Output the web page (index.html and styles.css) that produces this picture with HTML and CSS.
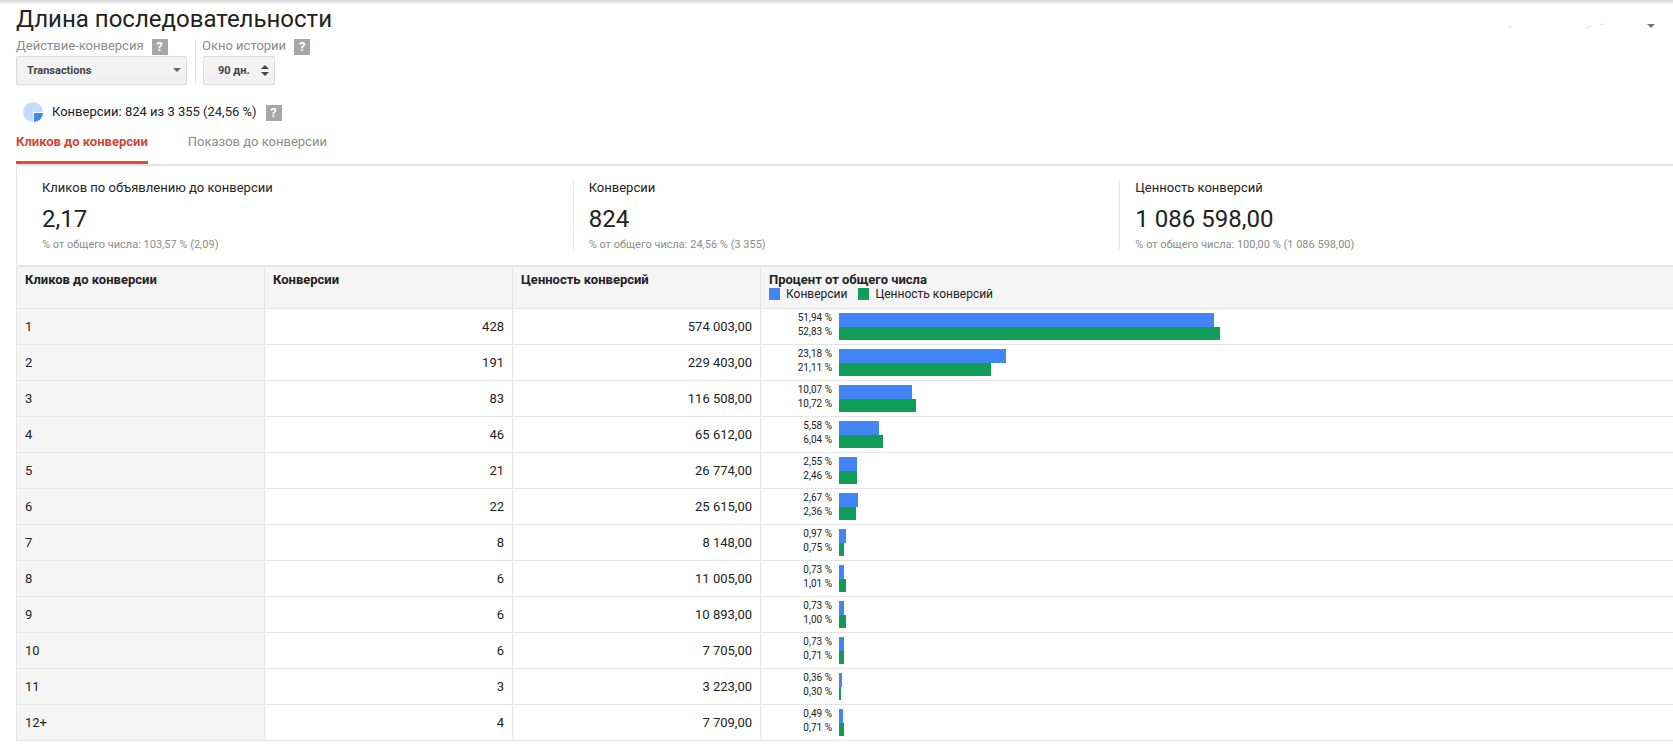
FILE: index.html
```html
<!DOCTYPE html>
<html lang="ru">
<head>
<meta charset="utf-8">
<title>Длина последовательности</title>
<link rel="stylesheet" href="styles.css">
</head>
<body>
<header class="head">
  <h1 class="title">Длина последовательности</h1>
  <div class="account">
    <svg class="marks" width="110" height="8" viewBox="0 0 110 8" aria-hidden="true"><path d="M2 6l3-2M80 6l5-2M94 3l4-1" stroke="#ddd" fill="none"/></svg>
    <button class="account-menu" type="button" aria-label="Меню"><svg width="8" height="4" viewBox="0 0 8 4"><path d="M0 0h8L4 4z" fill="#777"/></svg></button>
  </div>
</header>
<main>
  <form class="filters">
    <div class="filter">
      <div class="filter-label"><label for="action">Действие-конверсия</label><button class="help" type="button">?</button></div>
      <div class="picker picker-wide">
        <select id="action"><option>Transactions</option></select>
        <svg class="picker-icon" width="8" height="4" viewBox="0 0 8 4"><path d="M0 0h8L4 4z" fill="#666"/></svg>
      </div>
    </div>
    <div class="filter filter-second">
      <div class="filter-label"><label for="window">Окно истории</label><button class="help" type="button">?</button></div>
      <div class="picker picker-narrow">
        <select id="window"><option>90 дн.</option></select>
        <svg class="picker-icon" width="8" height="12" viewBox="0 0 8 12"><path d="M0 5h8L4 1zM0 8h8L4 12z" fill="#444"/></svg>
      </div>
    </div>
  </form>

  <div class="segment">
    <svg class="pie" width="20" height="20" viewBox="0 0 20 20"><circle cx="10" cy="10" r="10" fill="#c6dafc"/><path d="M10 10h10v1a9 9 0 0 1-9 9h-1z" fill="#fff"/><path d="M11 11h9a9 9 0 0 1-9 9z" fill="#4285f4"/></svg>
    <span>Конверсии: 824 из 3 355 (24,56 %)</span>
    <button class="help" type="button">?</button>
  </div>

  <nav class="tabs">
    <a class="tab tab-active" href="#clicks">Кликов до конверсии</a>
    <a class="tab" href="#views">Показов до конверсии</a>
  </nav>

  <section class="summary">
    <div class="stat"><div class="stat-name">Кликов по объявлению до конверсии</div><div class="stat-value">2,17</div><div class="stat-note">% от общего числа: 103,57 % (2,09)</div></div>
    <div class="stat"><div class="stat-name">Конверсии</div><div class="stat-value">824</div><div class="stat-note">% от общего числа: 24,56 % (3 355)</div></div>
    <div class="stat"><div class="stat-name">Ценность конверсий</div><div class="stat-value">1 086 598,00</div><div class="stat-note">% от общего числа: 100,00 % (1 086 598,00)</div></div>
  </section>

  <table class="report">
    <thead>
      <tr>
        <th class="col">Кликов до конверсии</th>
        <th class="col">Конверсии</th>
        <th class="col">Ценность конверсий</th>
        <th>Процент от общего числа
          <div class="legend"><span class="swatch blue"></span><span>Конверсии</span><span class="swatch green"></span><span>Ценность конверсий</span></div>
        </th>
      </tr>
    </thead>
    <tbody>
      <tr><td>1</td><td>428</td><td>574 003,00</td><td><div class="chart"><span>51,94 %</span><div class="track"><div class="bar blue" style="width:51.94%"></div></div><span>52,83 %</span><div class="track"><div class="bar green" style="width:52.83%"></div></div></div></td></tr>
      <tr><td>2</td><td>191</td><td>229 403,00</td><td><div class="chart"><span>23,18 %</span><div class="track"><div class="bar blue" style="width:23.18%"></div></div><span>21,11 %</span><div class="track"><div class="bar green" style="width:21.11%"></div></div></div></td></tr>
      <tr><td>3</td><td>83</td><td>116 508,00</td><td><div class="chart"><span>10,07 %</span><div class="track"><div class="bar blue" style="width:10.07%"></div></div><span>10,72 %</span><div class="track"><div class="bar green" style="width:10.72%"></div></div></div></td></tr>
      <tr><td>4</td><td>46</td><td>65 612,00</td><td><div class="chart"><span>5,58 %</span><div class="track"><div class="bar blue" style="width:5.58%"></div></div><span>6,04 %</span><div class="track"><div class="bar green" style="width:6.04%"></div></div></div></td></tr>
      <tr><td>5</td><td>21</td><td>26 774,00</td><td><div class="chart"><span>2,55 %</span><div class="track"><div class="bar blue" style="width:2.55%"></div></div><span>2,46 %</span><div class="track"><div class="bar green" style="width:2.46%"></div></div></div></td></tr>
      <tr><td>6</td><td>22</td><td>25 615,00</td><td><div class="chart"><span>2,67 %</span><div class="track"><div class="bar blue" style="width:2.67%"></div></div><span>2,36 %</span><div class="track"><div class="bar green" style="width:2.36%"></div></div></div></td></tr>
      <tr><td>7</td><td>8</td><td>8 148,00</td><td><div class="chart"><span>0,97 %</span><div class="track"><div class="bar blue" style="width:0.97%"></div></div><span>0,75 %</span><div class="track"><div class="bar green" style="width:0.75%"></div></div></div></td></tr>
      <tr><td>8</td><td>6</td><td>11 005,00</td><td><div class="chart"><span>0,73 %</span><div class="track"><div class="bar blue" style="width:0.73%"></div></div><span>1,01 %</span><div class="track"><div class="bar green" style="width:1.01%"></div></div></div></td></tr>
      <tr><td>9</td><td>6</td><td>10 893,00</td><td><div class="chart"><span>0,73 %</span><div class="track"><div class="bar blue" style="width:0.73%"></div></div><span>1,00 %</span><div class="track"><div class="bar green" style="width:1%"></div></div></div></td></tr>
      <tr><td>10</td><td>6</td><td>7 705,00</td><td><div class="chart"><span>0,73 %</span><div class="track"><div class="bar blue" style="width:0.73%"></div></div><span>0,71 %</span><div class="track"><div class="bar green" style="width:0.71%"></div></div></div></td></tr>
      <tr><td>11</td><td>3</td><td>3 223,00</td><td><div class="chart"><span>0,36 %</span><div class="track"><div class="bar blue" style="width:0.36%"></div></div><span>0,30 %</span><div class="track"><div class="bar green" style="width:0.3%"></div></div></div></td></tr>
      <tr><td>12+</td><td>4</td><td>7 709,00</td><td><div class="chart"><span>0,49 %</span><div class="track"><div class="bar blue" style="width:0.49%"></div></div><span>0,71 %</span><div class="track"><div class="bar green" style="width:0.71%"></div></div></div></td></tr>
    </tbody>
  </table>
</main>
</body>
</html>
```

FILE: styles.css
```css
* { box-sizing: border-box; }
body {
  margin: 0;
  font: 13px/16px Roboto, "Noto Sans", sans-serif;
  color: #222;
  background: #fff;
}
button { padding: 0; border: 0; background: none; font: inherit; }
main { padding-left: 16px; }

.head {
  display: flex;
  justify-content: space-between;
  padding: 5px 18px 0 16px;
  background: linear-gradient(#d6d6d6, #fff 5px);
}
.title { margin: 0; font-size: 24px; line-height: 28px; font-weight: 400; }
.account { display: flex; align-items: center; gap: 31px; padding-top: 14px; }
.account-menu { display: flex; }

.filters { display: flex; padding-top: 6px; }
.filter-label { display: flex; gap: 8px; color: #8c8c8c; height: 16px; line-height: 14px; }
.filter-second { margin-left: 8px; border-left: 1px solid #e5e5e5; }
.filter-second .filter-label { padding-left: 6px; }
.filter-second .picker { margin-left: 7px; }
.help {
  width: 16px;
  height: 16px;
  background: #a6a6a6;
  color: #fff;
  font-weight: 700;
  line-height: 16px;
  text-align: center;
}
.picker { position: relative; height: 30px; }
.picker-wide { width: 171px; }
.picker-narrow { width: 72px; }
.picker select {
  appearance: none;
  width: 100%;
  height: 29px;
  margin: 1px 0 0;
  padding: 0 10px;
  border: 1px solid #dcdcdc;
  border-radius: 2px;
  background: linear-gradient(#f5f5f5, #f1f1f1);
  color: #444;
  font: 700 11px/16px Roboto, "Noto Sans", sans-serif;
}
.picker-narrow select { padding: 0 14px; }
.picker-icon { position: absolute; right: 6px; top: 0; bottom: 0; margin: auto 0; }

.segment { display: flex; align-items: center; gap: 9px; padding: 16px 0 0 7px; height: 37px; }
.segment .help { margin-top: 2px; }

.tabs { display: flex; gap: 40px; margin-top: 8px; border-bottom: 1px solid #e5e5e5; }
.tab {
  height: 34px;
  padding-top: 4px;
  border-bottom: 3px solid transparent;
  color: #8c8c8c;
  text-decoration: none;
}
.tab-active { border-color: #dd4b39; color: #d14836; font-weight: 700; }

.summary {
  display: flex;
  padding: 15px 7px 15px 11px;
  border: 1px solid #e5e5e5;
  border-right: 0;
  border-radius: 3px 0 0 3px;
}
.stat { flex: 1; height: 69px; padding-left: 15px; }
.stat:first-child { padding-left: 14px; }
.stat + .stat { border-left: 1px solid #e5e5e5; }
.stat-name { line-height: 14px; }
.stat-value { padding-top: 10px; font-size: 24px; line-height: 28px; }
.stat-note { padding-top: 4px; font-size: 11px; line-height: 16px; color: #8c8c8c; }

.report {
  width: 100%;
  table-layout: fixed;
  border-collapse: separate;
  border-spacing: 0;
  border: 1px solid #e5e5e5;
  border-width: 1px 0 0 1px;
}
.report th, .report td { border: 0 solid #e5e5e5; border-width: 0 1px 1px 0; }
.report th:last-child, .report td:last-child { border-right: 0; }
.report th {
  height: 42px;
  padding: 5px 8px 0;
  background: #f5f5f5;
  font-weight: 700;
  text-align: left;
  vertical-align: top;
}
.col { width: 248px; }
.report td { height: 36px; padding: 0 8px; text-align: right; }
.report td:first-child { background: #f5f5f5; text-align: left; }
.report td:last-child { padding: 4px 112px 4px 8px; }
.legend { display: flex; align-items: center; gap: 6px; height: 12px; font-size: 12px; font-weight: 400; }
.swatch { width: 11px; height: 12px; }
.legend .green { margin-left: 5px; }
.blue { background: #4285f4; }
.green { background: #0f9d58; }
.chart {
  display: grid;
  grid-template-columns: 63px 1fr;
  grid-template-rows: 14px 13px;
  column-gap: 7px;
  font-size: 10px;
  line-height: 10px;
}
.track, .bar { height: 100%; }
```
